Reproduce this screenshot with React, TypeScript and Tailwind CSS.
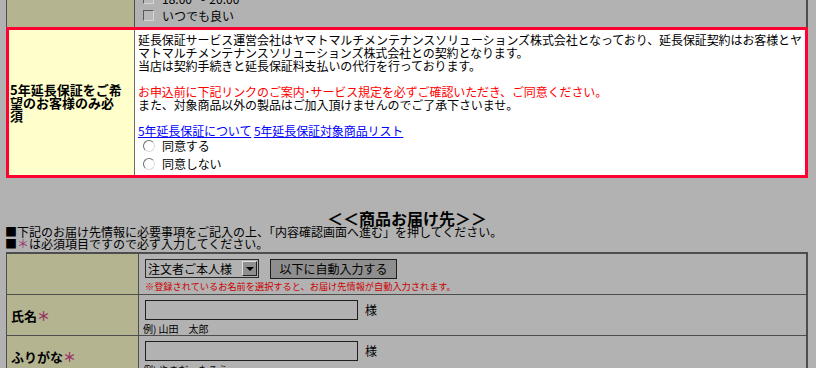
const FONT = "font-['Noto_Sans_CJK_JP','Liberation_Sans',sans-serif]";

function CheckRow({ label }: { label: string }) {
  return (
    <div className="flex h-[17px] shrink-0 items-center">
      <span className="h-[11px] w-[11px] border border-b-[#d6d6d6] border-l-[#5a5a5a] border-r-[#d6d6d6] border-t-[#5a5a5a] bg-[#b8b8b8]" />
      <span className="ml-[8px] leading-[12px]">{label}</span>
    </div>
  );
}

function RadioRow({ label }: { label: string }) {
  return (
    <div className="flex h-[18px] items-center pl-[5px]">
      <span className="h-[12px] w-[12px] rounded-full border border-b-[#dcdcdc] border-l-[#6e6e6e] border-r-[#dcdcdc] border-t-[#6e6e6e] bg-white" />
      <span className="ml-[7px] leading-[12px]">{label}</span>
    </div>
  );
}

function Star() {
  return <span className="text-[#993366]">＊</span>;
}

function NameRow({ label, example, last }: { label: string; example: string; last?: boolean }) {
  return (
    <div className={`flex h-[41px] ${last ? "" : "border-b border-[#4d4d4d]"}`}>
      <div className="flex w-[132px] items-center border-r border-[#4d4d4d] bg-[#b4b491] pl-[4px] text-[13px] font-bold leading-[13px]">
        {label}
        <Star />
      </div>
      <div className="flex-1 pl-[6px] pt-[5px]">
        <div className="flex items-center">
          <div className="h-[20px] w-[213px] border border-[#1e1e1e] bg-[#b2b2b2]" />
          <span className="ml-[7px] leading-[12px]">様</span>
        </div>
        <div className="-ml-[2px] mt-[3px] text-[10px] leading-[12px]">{example}</div>
      </div>
    </div>
  );
}

export default function App() {
  return (
    <div className={`h-[368px] w-[816px] overflow-hidden bg-[#b2b2b2] text-[12px] text-black ${FONT}`}>
      <div className="ml-[6px] w-[802px]">
        {/* 上の表のつづき */}
        <div className="flex h-[27px] border-l border-r-2 border-[#4d4d4d]">
          <div className="w-[128px] border-r border-[#4d4d4d] bg-[#b4b491]" />
          <div className="flex flex-1 flex-col justify-end overflow-hidden pb-[3px] pl-[8px]">
            <CheckRow label="18:00 ～ 20:00" />
            <CheckRow label="いつでも良い" />
          </div>
        </div>

        {/* 5年延長保証 */}
        <div className="flex border-[3px] border-[#ff0033]">
          <div className="flex w-[126px] items-center border-r border-[#6b6b6b] bg-[#ffffcc] pl-[1px] text-[13px] font-bold leading-[13px]">
            <div className="whitespace-nowrap">
              5年延長保証をご希
              <br />
              望のお客様のみ必
              <br />須
            </div>
          </div>
          <div className="flex-1 bg-white pb-[2px] pl-[3px] pt-[3px] leading-[13px] tracking-[-0.1px]">
            <div className="whitespace-nowrap">
              延長保証サービス運営会社はヤマトマルチメンテナンスソリューションズ株式会社となっており、延長保証契約はお客様とヤ
            </div>
            <div>マトマルチメンテナンスソリューションズ株式会社との契約となります。</div>
            <div>当店は契約手続きと延長保証料支払いの代行を行っております。</div>
            <div className="h-[13px]" />
            <div className="text-[#ff0000]">
              お申込前に下記リンクのご案内･サービス規定を必ずご確認いただき、ご同意ください。
            </div>
            <div>また、対象商品以外の製品はご加入頂けませんのでご了承下さいませ。</div>
            <div className="h-[13px]" />
            <div className="text-[#0000ff]">
              <a className="underline">5年延長保証について</a>{" "}
              <a className="underline">5年延長保証対象商品リスト</a>
            </div>
            <RadioRow label="同意する" />
            <RadioRow label="同意しない" />
          </div>
        </div>

        {/* 商品お届け先 */}
        <div className="mt-[33px] text-center text-[16px] font-bold leading-[15px]">＜＜商品お届け先＞＞</div>
        <div className="-ml-[1px] whitespace-nowrap leading-[12px]">
          ■下記のお届け先情報に必要事項をご記入の上、「内容確認画面へ進む」を押してください。
        </div>
        <div className="-ml-[1px] leading-[12px]">
          ■<Star />は必須項目ですので必ず入力してください。
        </div>

        <div className="mt-[2px] border-l border-r-2 border-t-2 border-[#4d4d4d]">
          <div className="flex h-[41px] border-b border-[#4d4d4d]">
            <div className="w-[132px] border-r border-[#4d4d4d] bg-[#b4b491]" />
            <div className="flex-1 pl-[6px] pt-[5px]">
              <div className="flex items-start">
                <div className="flex h-[19px] w-[114px] items-center border border-[#2a2a2a] bg-[#b2b2b2]">
                  <span className="flex-1 pl-[2px] leading-[12px]">注文者ご本人様</span>
                  <span className="mr-[1px] flex h-[15px] w-[15px] items-center justify-center border border-b-[#222] border-l-[#e0e0e0] border-r-[#222] border-t-[#e0e0e0] bg-[#8e8e8e]">
                    <span className="h-0 w-0 border-l-[4px] border-r-[4px] border-t-[4px] border-l-transparent border-r-transparent border-t-black" />
                  </span>
                </div>
                <div className="ml-[11px] flex h-[20px] w-[127px] items-center justify-center border border-[#1e1e1e] bg-[#8e8e8e] leading-[12px]">
                  以下に自動入力する
                </div>
              </div>
              <div className="mt-[1px] whitespace-nowrap text-[9.2px] leading-[12px] text-[#cc0000]">
                ※登録されているお名前を選択すると、お届け先情報が自動入力されます。
              </div>
            </div>
          </div>
          <NameRow label="氏名" example="例) 山田　太郎" />
          <NameRow label="ふりがな" example="例) やまだ　たろう" last />
        </div>
      </div>
    </div>
  );
}
